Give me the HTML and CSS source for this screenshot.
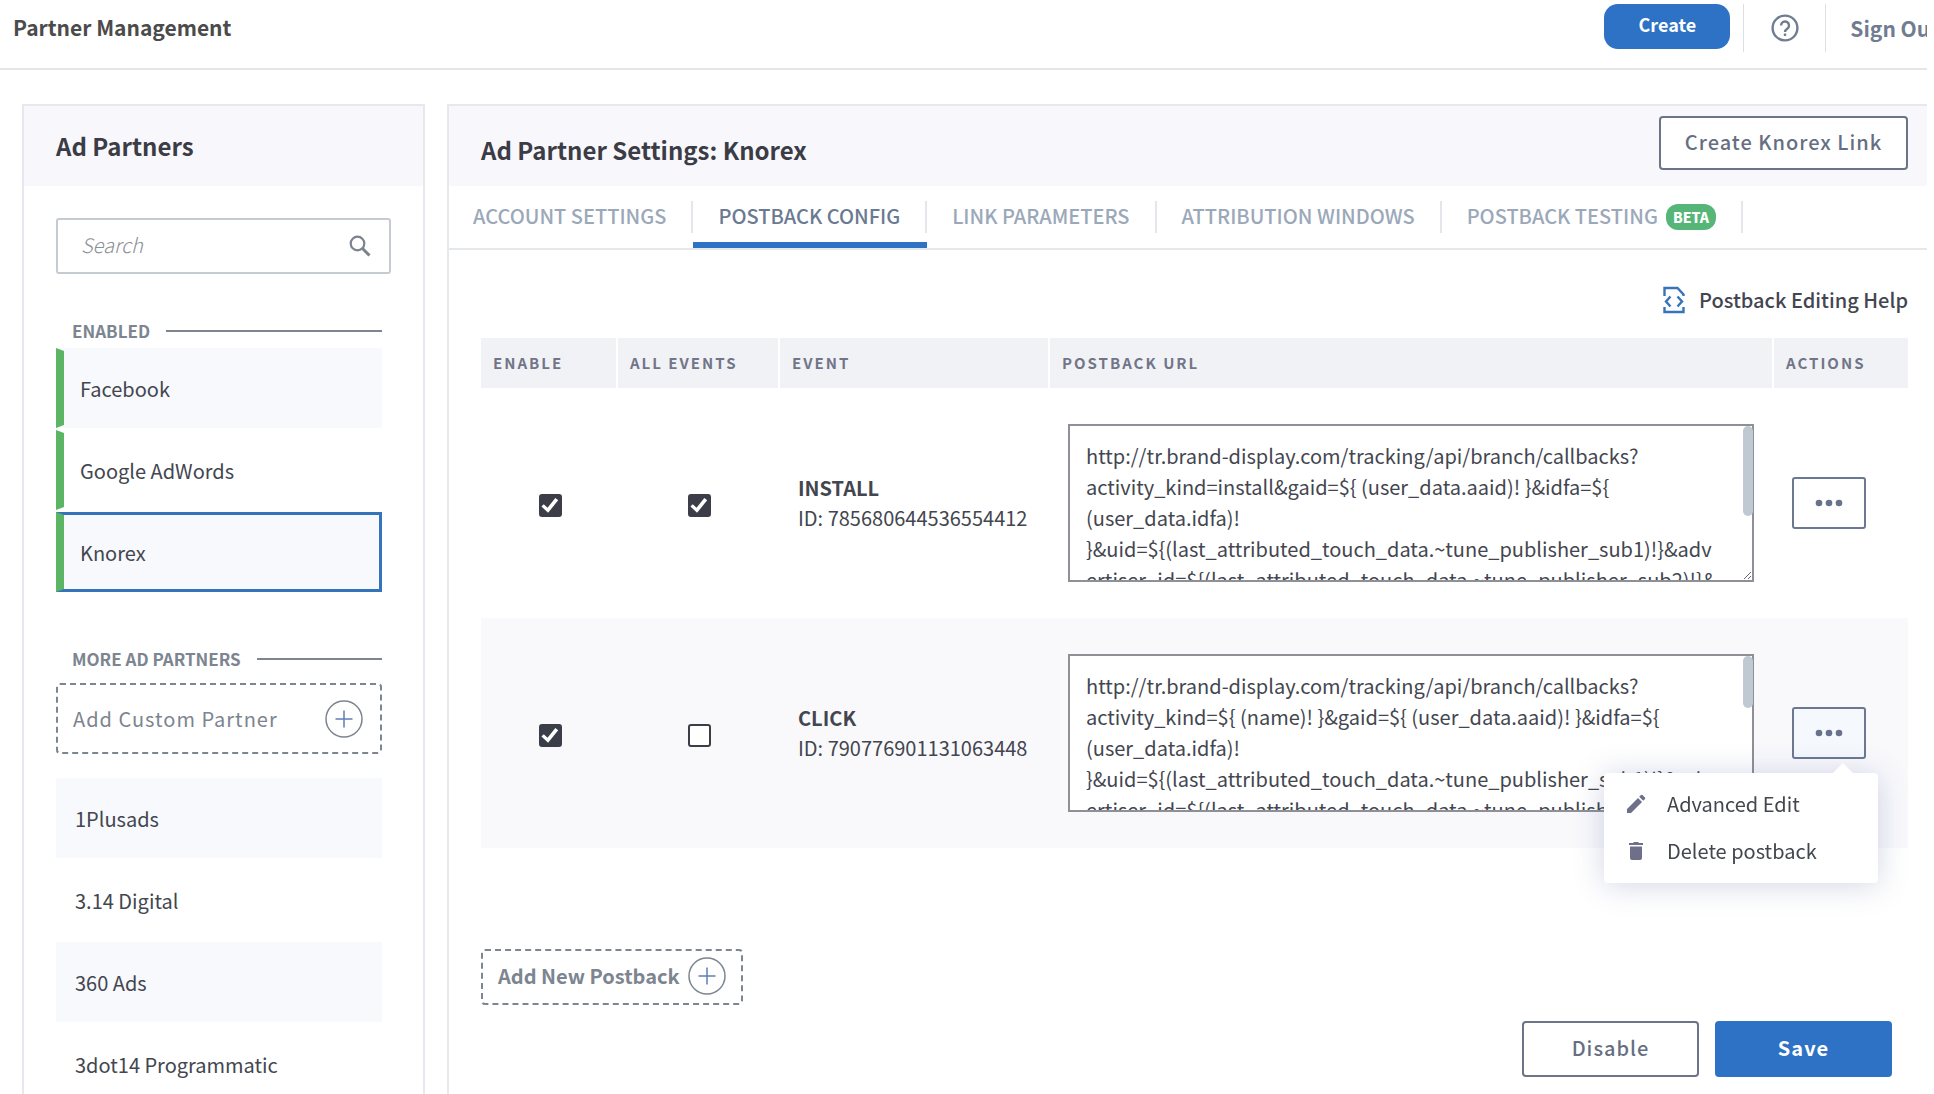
FILE: index.html
```html
<!DOCTYPE html>
<html lang="en">

<head>
    <meta charset="UTF-8">
    <title>Partner Management</title>

    <link rel="stylesheet" href="styles.css">
</head>

<body>
    <header class="topbar">
        <h1 class="topbar-title">Partner Management</h1>
        <div class="topbar-actions">
            <button class="create-btn" type="button">Create</button>
            <a class="help-link" href="#" aria-label="Help">
                <svg width="28" height="28" viewBox="0 0 28 28" fill="none" stroke="currentColor" stroke-width="2.400">
                    <circle cx="14" cy="14" r="12.400" />
                    <path d="M10 11.500a4 4 0 1 1 6.200 3.300c-1.400 1-2.200 1.600-2.200 3.200" />
                    <path d="M14 19.500v2.500" />
                </svg>
            </a>
            <a class="signout" href="#">Sign Out</a>
        </div>
    </header>

    <main class="layout">
        <aside class="panel partners">
            <div class="panel-head">
                <h2>Ad Partners</h2>
            </div>
            <div class="partners-body">
                <div class="search">
                    <input type="text" placeholder="Search" aria-label="Search">
                    <svg width="22" height="22" viewBox="0 0 22 22" fill="none" stroke="currentColor">
                        <circle cx="8.500" cy="8.500" r="6.800" stroke-width="2.200" />
                        <path d="M13.500 13.500l7 7" stroke-width="3" />
                    </svg>
                </div>

                <h3 class="divider">ENABLED</h3>
                <ul class="partner-list enabled">
                    <li><a href="#">Facebook</a></li>
                    <li><a href="#">Google AdWords</a></li>
                    <li><a class="selected" href="#">Knorex</a></li>
                </ul>

                <h3 class="divider">MORE AD PARTNERS</h3>
                <button class="dashed-btn custom-partner" type="button">
                    Add Custom Partner
                    <svg width="38" height="38" viewBox="0 0 38 38" fill="none" stroke="currentColor">
                        <circle cx="19" cy="19" r="18" stroke-width="1.500" />
                        <path class="plus" d="M19 10.500v17M10.500 19h17" stroke-width="1.500" />
                    </svg>
                </button>
                <ul class="partner-list">
                    <li><a href="#">1Plusads</a></li>
                    <li><a href="#">3.14 Digital</a></li>
                    <li><a href="#">360 Ads</a></li>
                    <li><a href="#">3dot14 Programmatic</a></li>
                </ul>
            </div>
        </aside>

        <section class="panel settings">
            <div class="panel-head">
                <h2>Ad Partner Settings: Knorex</h2>
                <button class="btn btn-outline link-btn" type="button">Create Knorex Link</button>
            </div>

            <nav class="tabs">
                <a href="#">ACCOUNT SETTINGS</a>
                <a class="active" href="#">POSTBACK CONFIG</a>
                <a href="#">LINK PARAMETERS</a>
                <a href="#">ATTRIBUTION WINDOWS</a>
                <a href="#">POSTBACK TESTING <span class="beta">BETA</span></a>
            </nav>

            <div class="settings-body">
                <a class="editing-help" href="#">
                    <svg width="22" height="28" viewBox="0 0 22 28" fill="none" stroke="currentColor"
                        stroke-width="2.400">
                        <path d="M1.500 10V2h13l6 6.500V10" />
                        <path d="M1.500 21v5h19v-5" />
                        <path d="M7.500 10.500L3 15.500l4.500 5M14.500 10.500l4.500 5-4.500 5" />
                    </svg>
                    Postback Editing Help
                </a>

                <table class="postbacks">
                    <thead>
                        <tr>
                            <th class="col-enable">ENABLE</th>
                            <th class="col-all">ALL EVENTS</th>
                            <th class="col-event">EVENT</th>
                            <th>POSTBACK URL</th>
                            <th class="col-actions">ACTIONS</th>
                        </tr>
                    </thead>
                    <tbody>
                        <tr>
                            <td class="check"><input type="checkbox" aria-label="Enable INSTALL" checked></td>
                            <td class="check"><input type="checkbox" aria-label="All events for INSTALL" checked></td>
                            <td><strong>INSTALL</strong><br>ID: 785680644536554412</td>
                            <td>
                                <div class="url-box">
                                    <textarea aria-label="INSTALL postback URL">http://tr.brand-display.com/tracking/api/branch/callbacks?activity_kind=install&amp;gaid=${ (user_data.aaid)! }&amp;idfa=${ (user_data.idfa)! }&amp;uid=${(last_attributed_touch_data.~tune_publisher_sub1)!}&amp;advertiser_id=${(last_attributed_touch_data.~tune_publisher_sub2)!}&amp;campaign_id=${(last_attributed_touch_data.~campaign_id)!}&amp;timestamp=${(timestamp)!}</textarea>
                                    <span class="thumb thumb-long"></span>
                                </div>
                            </td>
                            <td>
                                <div class="actions">
                                    <button class="more-btn" type="button" aria-label="Actions for INSTALL">
                                        <svg width="28" height="8" viewBox="0 0 28 8" fill="currentColor">
                                            <circle cx="4" cy="4" r="3.300" />
                                            <circle cx="14" cy="4" r="3.300" />
                                            <circle cx="24" cy="4" r="3.300" />
                                        </svg>
                                    </button>
                                </div>
                            </td>
                        </tr>
                        <tr>
                            <td class="check"><input type="checkbox" aria-label="Enable CLICK" checked></td>
                            <td class="check"><input type="checkbox" aria-label="All events for CLICK"></td>
                            <td><strong>CLICK</strong><br>ID: 790776901131063448</td>
                            <td>
                                <div class="url-box">
                                    <textarea aria-label="CLICK postback URL">http://tr.brand-display.com/tracking/api/branch/callbacks?activity_kind=${ (name)! }&amp;gaid=${ (user_data.aaid)! }&amp;idfa=${ (user_data.idfa)! }&amp;uid=${(last_attributed_touch_data.~tune_publisher_sub1)!}&amp;advertiser_id=${(last_attributed_touch_data.~tune_publisher_sub2)!}&amp;campaign_id=${(last_attributed_touch_data.~campaign_id)!}&amp;campaign=${(last_attributed_touch_data.~campaign)!}&amp;timestamp=${(timestamp)!}</textarea>
                                    <span class="thumb"></span>
                                </div>
                            </td>
                            <td>
                                <div class="actions">
                                    <button class="more-btn open" type="button" aria-label="Actions for CLICK">
                                        <svg width="28" height="8" viewBox="0 0 28 8" fill="currentColor">
                                            <circle cx="4" cy="4" r="3.300" />
                                            <circle cx="14" cy="4" r="3.300" />
                                            <circle cx="24" cy="4" r="3.300" />
                                        </svg>
                                    </button>
                                    <div class="menu">
                                        <button type="button">
                                            <svg width="20" height="20" viewBox="0 0 20 20" fill="currentColor">
                                                <path d="M1 19v-4L12 4l4 4L5 19zM13.200 2.800L15 1q.7-.6 1.400 0L19 3.600q.6.700 0 1.400l-1.800 1.800z" />
                                            </svg>
                                            Advanced Edit
                                        </button>
                                        <button type="button">
                                            <svg width="20" height="20" viewBox="0 0 20 20" fill="currentColor">
                                                <path d="M3 2h4l1-1h4l1 1h4v2H3zM4 5.500h12V17q0 2-2 2H6q-2 0-2-2z" />
                                            </svg>
                                            Delete postback
                                        </button>
                                    </div>
                                </div>
                            </td>
                        </tr>
                    </tbody>
                </table>

                <button class="dashed-btn new-postback" type="button">
                    Add New Postback
                    <svg width="38" height="38" viewBox="0 0 38 38" fill="none" stroke="currentColor">
                        <circle cx="19" cy="19" r="18" stroke-width="1.500" />
                        <path class="plus" d="M19 10.500v17M10.500 19h17" stroke-width="1.500" />
                    </svg>
                </button>

                <div class="form-actions">
                    <button class="btn btn-outline" type="button">Disable</button>
                    <button class="btn btn-primary" type="button">Save</button>
                </div>
            </div>
        </section>
    </main>
</body>

</html>
```
FILE: styles.css
```css
* {
    box-sizing: border-box;
}

body {
    margin: 0;
    padding-right: 7px;
    overflow-x: hidden;
    background-color: #fff;
    color: #43464f;
    font-family: 'Noto Sans CJK SC', 'Open Sans', sans-serif;
    font-size: 20px;
    line-height: 30px;
}

h1,
h2,
h3,
ul {
    margin: 0;
    padding: 0;
}

a {
    color: inherit;
    text-decoration: none;
}

button,
input,
textarea {
    font: inherit;
    color: inherit;
}

button {
    cursor: pointer;
}

svg {
    display: block;
    flex: none;
}

/* Top bar */
.topbar {
    display: flex;
    align-items: flex-start;
    justify-content: space-between;
    height: 70px;
    padding: 4px 0 0 13px;
    border-bottom: 2px solid #e4e6e8;
    overflow: hidden;
}

.topbar-title {
    color: #4b4b4b;
    font-size: 21px;
    font-weight: 700;
    line-height: 46px;
}

.topbar-actions {
    display: flex;
    margin-right: -12px;
    color: #6f7c91;
    line-height: 48px;
}

.create-btn {
    width: 126px;
    height: 45px;
    margin-right: 13px;
    padding: 0;
    border: none;
    border-radius: 14px;
    background-color: #2d72c4;
    color: #fff;
    font-size: 18px;
    font-weight: 700;
    line-height: 41px;
    padding-bottom: 4px;
}

.help-link,
.signout {
    display: flex;
    align-items: center;
    height: 48px;
    border-left: 1px solid #dcdfe3;
}

.help-link {
    width: 82px;
    justify-content: center;
}

.signout {
    padding: 0 0 1px 24px;
    font-size: 21px;
    font-weight: 700;
    white-space: nowrap;
}

/* Panels */
.layout {
    display: flex;
    gap: 22px;
    padding: 34px 0 0 22px;
}

.panel {
    border: 2px solid #e6e8ed;
    border-bottom: none;
}

.panel-head {
    display: flex;
    align-items: center;
    justify-content: space-between;
    height: 80px;
    padding: 0 32px;
    background-color: #f8f8fc;
}

.panel-head h2 {
    color: #3b3c46;
    font-size: 24px;
    font-weight: 700;
}

.partners {
    flex: none;
    width: 403px;
}

.partners-body {
    padding: 32px 41px 0 32px;
}

.search {
    display: flex;
    align-items: center;
    height: 56px;
    margin: 0 -9px 40px 0;
    padding: 0 18px 0 23px;
    border: 2px solid #c5cbd3;
    border-radius: 3px;
    color: #7b838f;
}

.search input {
    flex: 1;
    min-width: 0;
    padding: 0 0 2px;
    border: none;
    outline: none;
    background: none;
}

.search input::placeholder {
    color: #8b8f96;
    font-style: italic;
    font-weight: 300;
}

.divider {
    display: flex;
    align-items: center;
    gap: 16px;
    padding-left: 16px;
    color: #7c8590;
    font-size: 17px;
    font-weight: 700;
    line-height: 34px;
}

.divider::after {
    content: "";
    flex: 1;
    border-top: 2px solid #7c8590;
}

.partner-list {
    display: flex;
    flex-direction: column;
    gap: 2px;
    list-style: none;
}

.partner-list a {
    display: flex;
    align-items: center;
    height: 80px;
    padding: 2px 0 0 16px;
    border: 3px solid transparent;
}

.partner-list li:nth-child(odd) a {
    background-color: #f7f9fd;
}

.enabled {
    margin-bottom: 50px;
}

.enabled a {
    border-left: 8px solid #5bb564;
}

.enabled a.selected {
    border-color: #3574bb #3574bb #3574bb #5bb564;
}

.dashed-btn {
    display: flex;
    align-items: center;
    border: 2px dashed #7c8590;
    border-radius: 4px;
    background: none;
    color: #7c8590;
}

.dashed-btn .plus {
    stroke: #5f7fb5;
}

.custom-partner {
    justify-content: space-between;
    width: 100%;
    height: 71px;
    margin: 7px 0 24px;
    padding: 0 17px 0 15px;
    letter-spacing: 1px;
}

/* Settings */
.settings {
    flex: 1;
    min-width: 0;
    border-right: none;
}

.settings .panel-head {
    align-items: flex-start;
    padding: 10px 19px 0 32px;
}

.settings .panel-head h2 {
    padding-top: 19px;
}

.tabs {
    display: flex;
    height: 64px;
    border-bottom: 2px solid #e4e8eb;
    color: #9ba8b9;
    font-weight: 500;
}

.tabs a {
    position: relative;
    display: flex;
    align-items: center;
    height: 32px;
    margin-top: 15px;
    padding: 0 25px 2px;
    border-right: 2px solid #e4e6ec;
    white-space: nowrap;
}

.tabs a:first-child {
    padding-left: 24px;
}

.tabs a.active {
    color: #6a7a92;
}

.tabs a.active::after {
    content: "";
    position: absolute;
    left: 0;
    right: -2px;
    bottom: -15px;
    height: 6px;
    background-color: #2d72c4;
}

.beta {
    margin: 2px 0 0 8px;
    padding: 0 7px;
    border-radius: 12px;
    background-color: #55b677;
    color: #fff;
    font-size: 14px;
    font-weight: 900;
    line-height: 26px;
}

.settings-body {
    padding: 34px 19px 17px 32px;
}

.editing-help {
    display: flex;
    align-items: center;
    justify-content: flex-end;
    gap: 14px;
    height: 32px;
    margin-bottom: 22px;
    font-weight: 500;
}

.editing-help svg {
    color: #3574bb;
}

/* Postback table */
.postbacks {
    width: 100%;
    border-collapse: collapse;
    table-layout: fixed;
}

.postbacks th {
    height: 50px;
    padding: 0 12px;
    border-right: 2px solid #fff;
    background-color: #f1f2f6;
    color: #727588;
    font-size: 15px;
    font-weight: 700;
    letter-spacing: 2px;
    text-align: left;
}

.postbacks th:last-child {
    border-right: none;
}

.col-enable {
    width: 136px;
}

.col-all {
    width: 162px;
}

.col-event {
    width: 270px;
}

.col-actions {
    width: 135px;
}

.postbacks td {
    height: 230px;
    padding: 0 19px;
}

.postbacks tbody tr:nth-child(even) {
    background-color: #f9f9fc;
}

.postbacks strong {
    font-weight: 700;
}

.postbacks .check {
    padding: 0 0 0 2px;
    text-align: center;
}

.check input {
    appearance: none;
    width: 23px;
    height: 23px;
    margin: 0;
    border: 2px solid #3b3d49;
    border-radius: 3px;
    background-color: #fff;
    vertical-align: middle;
}

.check input:checked {
    background-color: #3b3d49;
}

.check input:checked::before {
    content: "";
    display: block;
    width: 19px;
    height: 19px;
    background-color: #fff;
    clip-path: polygon(5% 55%, 17% 43%, 37% 61%, 78% 10%, 93% 22%, 40% 88%);
}

.url-box {
    position: relative;
}

.postbacks textarea {
    display: block;
    width: 100%;
    height: 158px;
    padding: 14px 31px 14px 16px;
    border: 2px solid #8d9096;
    background-color: #fff;
    line-height: 31px;
    outline: none;
    scrollbar-width: none;
}

/* scroll position marker */
.thumb {
    position: absolute;
    top: 2px;
    right: 1px;
    width: 10px;
    height: 52px;
    border-radius: 5px;
    background-color: #c0c8d1;
}

.thumb-long {
    height: 90px;
}

.actions {
    position: relative;
    width: 74px;
}

.more-btn {
    display: flex;
    align-items: center;
    justify-content: center;
    width: 74px;
    height: 52px;
    padding: 0;
    border: 2px solid #6b7890;
    border-radius: 3px;
    background-color: #fff;
    color: #66738b;
}

.more-btn.open {
    background-color: #f5f8fd;
}

.menu {
    position: absolute;
    top: 66px;
    right: -12px;
    z-index: 1;
    width: 274px;
    padding: 7px 0 9px;
    border-radius: 4px;
    background-color: #fff;
    box-shadow: 0 2px 30px rgba(80, 90, 150, 0.25);
}

.menu::before {
    content: "";
    position: absolute;
    top: -10px;
    right: 24px;
    border: 11px solid transparent;
    border-top: none;
    border-bottom-color: #fff;
}

.menu button {
    display: flex;
    align-items: center;
    gap: 21px;
    width: 100%;
    height: 47px;
    padding: 0 22px;
    border: none;
    background: none;
    text-align: left;
}

.menu svg {
    color: #6d7088;
}

/* Buttons */
.new-postback {
    gap: 8px;
    height: 56px;
    margin: 101px 0 16px;
    padding: 0 15px 2px;
    font-weight: 700;
}

.form-actions {
    display: flex;
    justify-content: flex-end;
    gap: 16px;
    padding-right: 16px;
}

.btn {
    width: 177px;
    height: 56px;
    padding: 0 0 2px;
    border: 2px solid #6b7488;
    border-radius: 4px;
    font-weight: 500;
    letter-spacing: 1px;
}

.btn-outline {
    background-color: #fff;
    color: #666f82;
}

.btn-primary {
    border-color: #2d72c4;
    background-color: #2d72c4;
    color: #fff;
    font-weight: 700;
}

.link-btn {
    width: 249px;
    height: 54px;
}
```
